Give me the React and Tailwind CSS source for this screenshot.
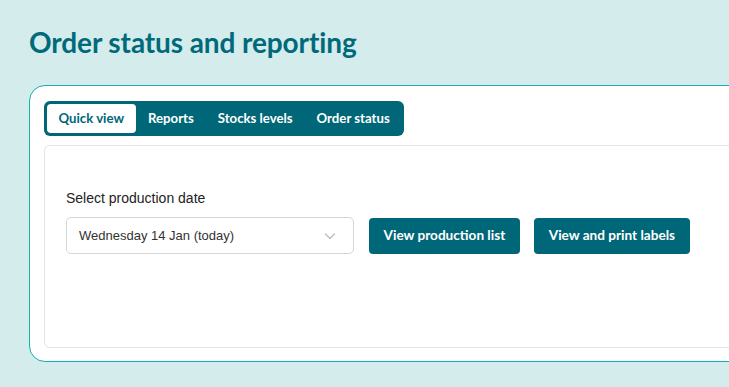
import React from "react";

const tabs = ["Quick view", "Reports", "Stocks levels", "Order status"];

function Chevron() {
  return (
    <svg width="14" height="14" viewBox="0 0 14 14" fill="none">
      <path d="M2.5 5l4.5 4.5L11.5 5" stroke="#bdbdbd" strokeWidth="1.3" strokeLinecap="round" strokeLinejoin="round" />
    </svg>
  );
}

export default function App() {
  return (
    <div className="w-[729px] h-[387px] overflow-hidden bg-[#d4ecec] pl-[29px] pt-[25px] font-['Lato',sans-serif]">
      {/* title */}
      <h1 className="text-[28px] leading-[34px] font-bold text-[#006a7b] tracking-[-0.1px]">
        Order status and reporting
      </h1>

      {/* card */}
      <div className="mt-[26px] w-[760px] bg-white border border-[#17aabb] rounded-l-[16px] pt-[15px] pl-[14px] pb-[13px]">
        <div className="inline-flex items-center bg-[#006779] rounded-[6px] p-[3px] gap-[1px]">
          {tabs.map((t, i) => (
            <div
              key={t}
              className={`h-[29px] flex items-center px-[11.5px] rounded-[4px] text-[13.2px] font-bold ${
                i === 0 ? "bg-white text-[#006779]" : "text-white"
              }`}
            >
              {t}
            </div>
          ))}
        </div>

        <div className="mt-[9px] h-[203px] border border-[#dde5ee] rounded-l-[6px] pl-[21px] pt-[43px]">
          <div className="font-['Liberation_Sans',sans-serif] text-[14px] leading-[18px] text-[#222]">
            Select production date
          </div>
          <div className="mt-[10px] flex items-center gap-[15px]">
            <div className="w-[288px] h-[37px] border border-[#d6d6d6] rounded-[5px] flex items-center justify-between pl-[12px] pr-[16px] font-['Liberation_Sans',sans-serif] text-[13px] text-[#333]">
              <span>Wednesday 14 Jan (today)</span>
              <Chevron />
            </div>
            <button className="h-[36px] px-[14.5px] rounded-[4px] bg-[#006779] text-white text-[13.6px] font-bold">
              View production list
            </button>
            <button className="h-[36px] px-[15px] rounded-[4px] bg-[#006779] text-white text-[13.6px] font-bold -ml-[1px]">
              View and print labels
            </button>
          </div>
        </div>
      </div>
    </div>
  );
}
